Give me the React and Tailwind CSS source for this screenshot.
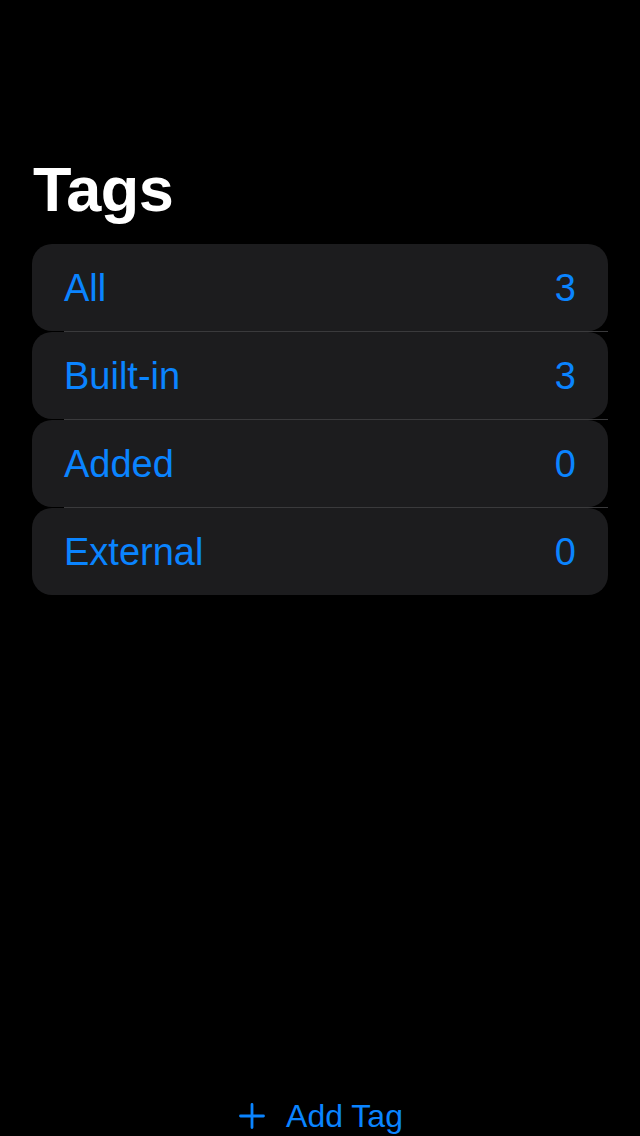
import React from "react";

const rows = [
  { label: "All", count: 3 },
  { label: "Built-in", count: 3 },
  { label: "Added", count: 0 },
  { label: "External", count: 0 },
];

export default function App() {
  return (
    <div
      className="h-[1136px] w-[640px] bg-black flex flex-col overflow-hidden"
      style={{ fontFamily: '"Liberation Sans", Arial, sans-serif' }}
    >
      <div className="flex-1 flex flex-col px-[32px] pt-[158px]">
        <h1 className="text-white font-bold text-[63px] leading-none tracking-[-0.5px] mb-[23px] pl-px">
          Tags
        </h1>
        <div className="flex flex-col">
          {rows.map((r, i) => (
            <React.Fragment key={r.label}>
              {i > 0 && <div className="h-px ml-[32px] bg-[#3a3a3c]" />}
              <div className="h-[87px] rounded-[20px] bg-[#1c1c1e] flex items-center justify-between px-[32px] text-[#0a84ff] text-[38px] leading-none">
                <span>{r.label}</span>
                <span>{r.count}</span>
              </div>
            </React.Fragment>
          ))}
        </div>
      </div>
      <div className="flex items-center justify-center gap-[21px] pb-[4px] pl-[2px] text-[#0a84ff]">
        <svg width="26" height="26" viewBox="0 0 26 26" fill="none" stroke="#0a84ff" strokeWidth="2.8" strokeLinecap="round">
          <path d="M13 1.5v23M1.5 13h23" />
        </svg>
        <span className="text-[32px] leading-none">Add Tag</span>
      </div>
    </div>
  );
}
